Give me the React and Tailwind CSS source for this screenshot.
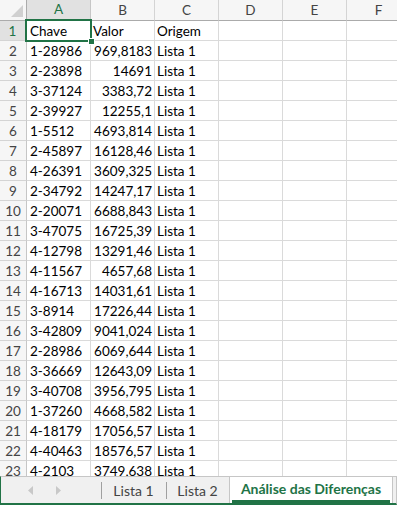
import React from "react";

const data = [
  ["1-28986", "969,8183"],
  ["2-23898", "14691"],
  ["3-37124", "3383,72"],
  ["2-39927", "12255,1"],
  ["1-5512", "4693,814"],
  ["2-45897", "16128,46"],
  ["4-26391", "3609,325"],
  ["2-34792", "14247,17"],
  ["2-20071", "6688,843"],
  ["3-47075", "16725,39"],
  ["4-12798", "13291,46"],
  ["4-11567", "4657,68"],
  ["4-16713", "14031,61"],
  ["3-8914", "17226,44"],
  ["3-42809", "9041,024"],
  ["2-28986", "6069,644"],
  ["3-36669", "12643,09"],
  ["3-40708", "3956,795"],
  ["1-37260", "4668,582"],
  ["4-18179", "17056,57"],
  ["4-40463", "18576,57"],
  ["4-2103", "3749,638"],
];

const font = { fontFamily: "Lato, 'Open Sans', sans-serif" };

function Row({ n, a, b, c, first }) {
  return (
    <div className="flex h-[20px] shrink-0">
      <div
        className={
          "w-[27px] shrink-0 flex items-center justify-center pt-[2px] border-b border-[#d4d4d4] " +
          (first
            ? "bg-[#e1e1e1] text-[#217346] border-r-2 border-r-[#217346]"
            : "bg-[#f6f6f6] text-[#444] border-r border-r-[#c6c6c6]")
        }
      >
        {n}
      </div>
      <div className="w-[64px] shrink-0 flex items-center pl-[3px] pt-[2px] border-b border-r border-[#dadada] text-black whitespace-nowrap overflow-hidden">
        {a}
      </div>
      <div
        className={
          "w-[64px] shrink-0 flex items-center pt-[2px] border-b border-r border-[#dadada] text-black whitespace-nowrap overflow-hidden " +
          (first ? "justify-start pl-[2px]" : "justify-end pr-[2px]")
        }
      >
        {b}
      </div>
      <div className="w-[64px] shrink-0 flex items-center pl-[2px] pt-[2px] border-b border-r border-[#dadada] text-black whitespace-nowrap overflow-hidden">
        {c}
      </div>
      <div className="w-[64px] shrink-0 border-b border-r border-[#dadada]" />
      <div className="w-[64px] shrink-0 border-b border-r border-[#dadada]" />
      <div className="w-[64px] shrink-0 border-b border-r border-[#dadada]" />
    </div>
  );
}

export default function App() {
  return (
    <div
      className="w-[397px] h-[505px] flex flex-col bg-white overflow-hidden text-[13.5px]"
      style={font}
    >
      <div className="relative flex-1 overflow-hidden">
        {/* column headers */}
        <div className="flex h-[21px] bg-[#f6f6f6] text-[#444]">
          <div className="w-[27px] shrink-0 border-b border-r border-[#ababab] relative">
            <svg className="absolute right-[3px] bottom-[3px]" width="12" height="12" viewBox="0 0 12 12">
              <polygon points="12,0 12,12 0,12" fill="#d0d0d0" />
            </svg>
          </div>
          <div className="w-[64px] shrink-0 flex items-center justify-center bg-[#e1e1e1] text-[#217346] border-b-2 border-b-[#217346] border-r border-r-[#c6c6c6]">
            A
          </div>
          {["B", "C", "D", "E", "F"].map((l) => (
            <div
              key={l}
              className="w-[64px] shrink-0 flex items-center justify-center border-b border-b-[#ababab] border-r border-r-[#d4d4d4]"
            >
              {l}
            </div>
          ))}
        </div>
        <Row n={1} a="Chave" b="Valor" c="Origem" first />
        {data.map((r, i) => (
          <Row key={i} n={i + 2} a={r[0]} b={r[1]} c="Lista 1" />
        ))}
        {/* selection */}
        <div className="absolute left-[25px] top-[19px] w-[67px] h-[23px] border-2 border-[#217346]" />
        <div className="absolute left-[88px] top-[38px] w-[7px] h-[7px] bg-[#217346] border border-white" />
      </div>

      {/* sheet tabs */}
      <div className="h-[29px] shrink-0 flex bg-[#f0f0f0] border-t border-[#c6c6c6] border-l border-l-[#217346] border-b-2 border-b-[#217346] border-r border-r-[#c6c6c6] text-[14px]">
        <div className="w-[100px] shrink-0 flex items-center">
          <svg className="ml-[27px]" width="6" height="9" viewBox="0 0 6 9">
            <polygon points="5,0 5,9 0,4.5" fill="#c8c8c8" />
          </svg>
          <svg className="ml-[22px]" width="6" height="9" viewBox="0 0 6 9">
            <polygon points="0,0 0,9 5,4.5" fill="#c8c8c8" />
          </svg>
        </div>
        <div className="w-[65px] shrink-0 flex items-center justify-center text-[#444] relative">
          <div className="absolute left-0 top-[5px] bottom-[4px] w-px bg-[#a0a0a0]" />
          Lista 1
        </div>
        <div className="w-[63px] shrink-0 flex items-center justify-center text-[#444] relative">
          <div className="absolute left-0 top-[5px] bottom-[4px] w-px bg-[#a0a0a0]" />
          Lista 2
        </div>
        <div className="w-[164px] shrink-0 flex flex-col bg-white border-x border-[#c6c6c6]">
          <div className="flex-1 flex items-center justify-center font-bold text-[#217346]">
            Análise das Diferenças
          </div>
          <div className="h-[3px] mx-[2px] bg-[#217346]" />
        </div>
      </div>
    </div>
  );
}
